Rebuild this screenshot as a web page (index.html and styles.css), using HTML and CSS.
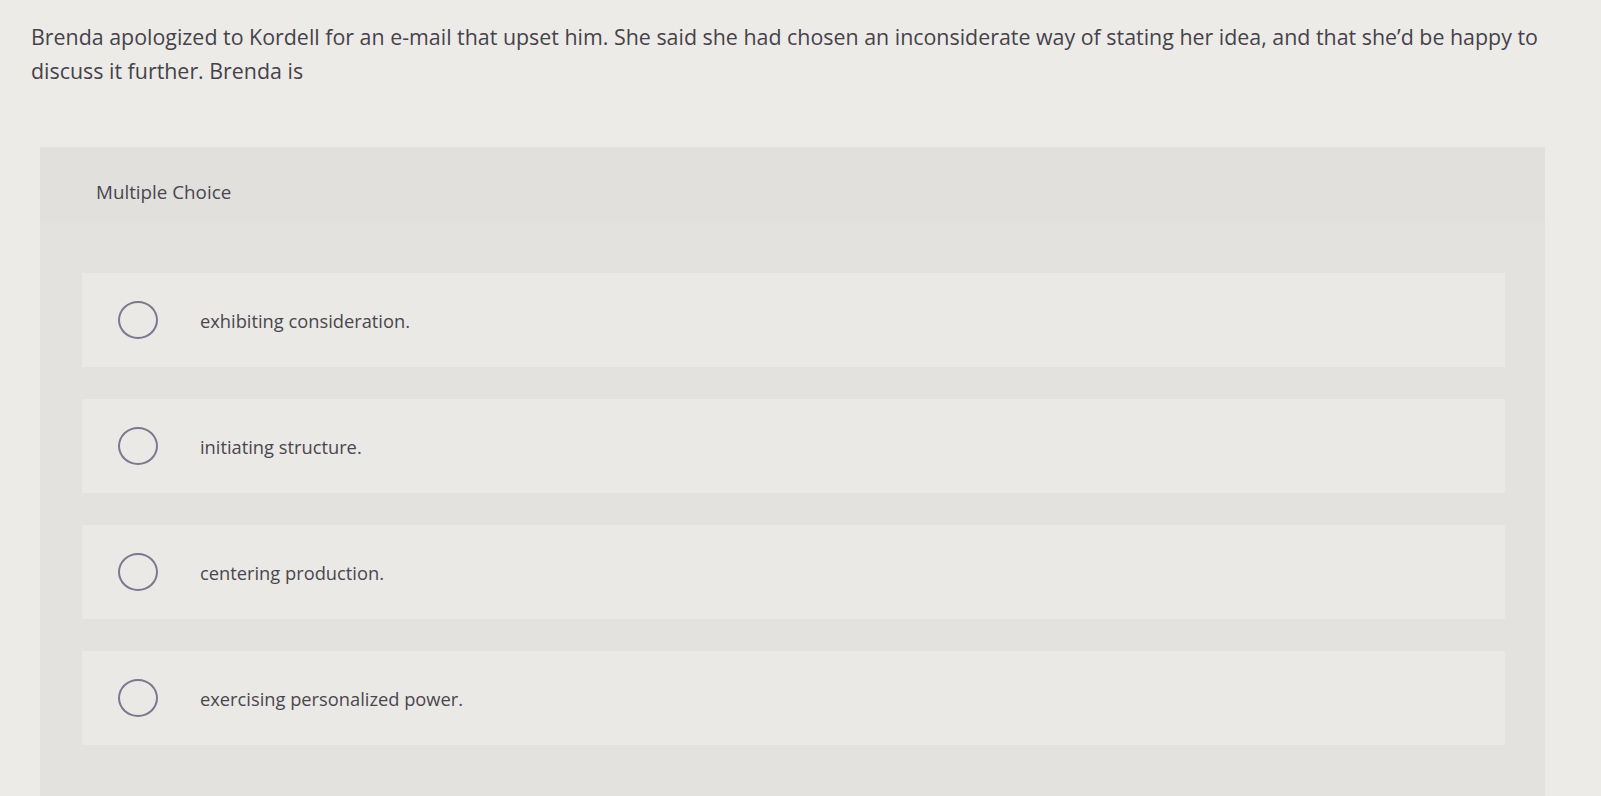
FILE: index.html
```html
<!DOCTYPE html>
<html lang="en">
<head>
<meta charset="utf-8">
<title>Multiple Choice</title>
<link rel="stylesheet" href="styles.css">
</head>
<body>
<div class="page">
  <p class="question">Brenda apologized to Kordell for an e-mail that upset him. She said she had chosen an inconsiderate way of stating her idea, and that she’d be happy to discuss it further. Brenda is</p>
  <section class="card">
    <div class="card-head">Multiple Choice</div>
    <div class="options">
      <label class="option"><span class="radio"></span><span class="opt-text">exhibiting consideration.</span></label>
      <label class="option"><span class="radio"></span><span class="opt-text">initiating structure.</span></label>
      <label class="option"><span class="radio"></span><span class="opt-text">centering production.</span></label>
      <label class="option"><span class="radio"></span><span class="opt-text">exercising personalized power.</span></label>
    </div>
  </section>
</div>
</body>
</html>
```

FILE: styles.css
```css
* { box-sizing: border-box; }
html, body {
  margin: 0;
  height: 100%;
  overflow: hidden;
}
body {
  background: #edebe7;
  font-family: "Open Sans", Lato, "Liberation Sans", sans-serif;
  color: #48444c;
}
.page {
  padding: 20px 0 0 31px;
}
.question {
  margin: 0;
  width: 1540px;
  font-size: 21.4px;
  line-height: 34px;
  color: #46424b;
}
.card {
  margin: 59px 0 0 9px;
  width: 1505px;
  height: 649px;
  background: #e3e2df;
}
.card-head {
  height: 76px;
  padding: 33px 0 0 56px;
  font-size: 18.8px;
  line-height: 24px;
  color: #4a4650;
  background: #e1e0dd;
}
.options {
  padding: 50px 40px 0 42px;
  display: flex;
  flex-direction: column;
  gap: 32px;
}
.option {
  height: 94px;
  display: flex;
  align-items: center;
  padding-left: 36px;
  background: #eae9e5;
}
.radio {
  width: 40px;
  height: 38px;
  border: 2px solid #7c7890;
  border-radius: 50%;
  flex: none;
  margin-right: 42px;
}
.opt-text {
  font-size: 18.3px;
  color: #4a4650;
}
```
